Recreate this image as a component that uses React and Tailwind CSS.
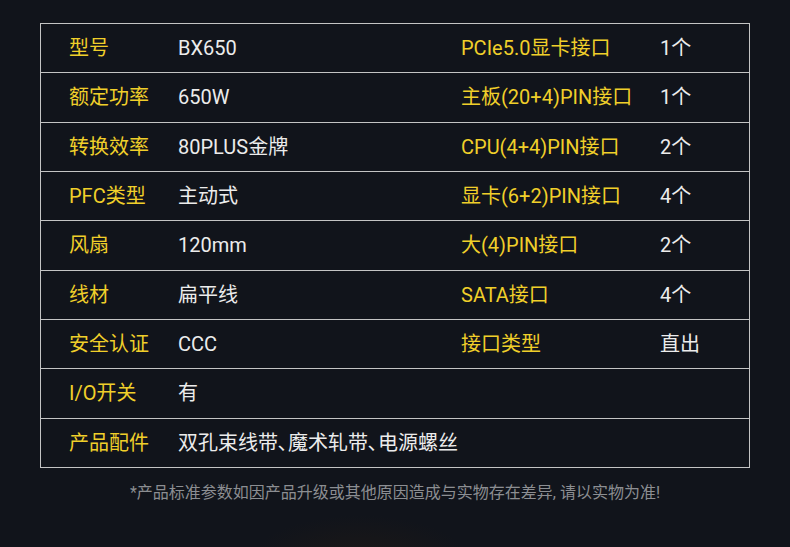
const rows = [
  ["型号", "BX650", "PCIe5.0显卡接口", "1个"],
  ["额定功率", "650W", "主板(20+4)PIN接口", "1个"],
  ["转换效率", "80PLUS金牌", "CPU(4+4)PIN接口", "2个"],
  ["PFC类型", "主动式", "显卡(6+2)PIN接口", "4个"],
  ["风扇", "120mm", "大(4)PIN接口", "2个"],
  ["线材", "扁平线", "SATA接口", "4个"],
  ["安全认证", "CCC", "接口类型", "直出"],
  ["I/O开关", "有", "", ""],
  ["产品配件", "双孔束线带､魔术轧带､电源螺丝", "", ""],
];

export default function App() {
  return (
    <div
      className="relative w-[790px] h-[547px] overflow-hidden bg-[#11141b]"
      style={{ fontFamily: 'Roboto, "Noto Sans CJK SC", sans-serif' }}
    >
      <div className="absolute left-[250px] top-[515px] w-[220px] h-[90px] rounded-full bg-[radial-gradient(ellipse_at_center,#1b1817_0%,#11141b_70%)]" />
      <div className="relative pt-[23px] px-[40px]">
        <div className="flex flex-col h-[445px] border border-[#c4c4c4]">
          {rows.map((r, i) => (
            <div
              key={i}
              className={
                "flex-1 grid grid-cols-[137px_283px_199px_1fr] items-center text-[20px] leading-none " +
                (i > 0 ? "border-t border-[#c4c4c4]" : "")
              }
            >
              <span className="pl-[28px] text-[#f0cf2a] whitespace-nowrap">{r[0]}</span>
              <span className="text-[#ececec] whitespace-nowrap">{r[1]}</span>
              <span className="text-[#f0cf2a] whitespace-nowrap">{r[2]}</span>
              <span className="text-[#ececec] whitespace-nowrap">{r[3]}</span>
            </div>
          ))}
        </div>
        <p className="mt-[17px] text-center text-[16px] leading-none text-[#8c8e92]">
          *产品标准参数如因产品升级或其他原因造成与实物存在差异, 请以实物为准!
        </p>
      </div>
    </div>
  );
}
